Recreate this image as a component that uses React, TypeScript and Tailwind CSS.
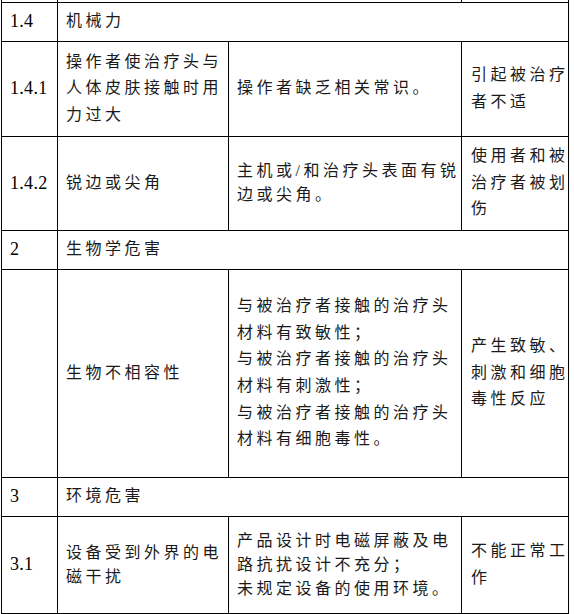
import React from 'react';

type Row = {
  no?: string;
  title?: string[];
  cause?: string[];
  effect?: string[];
  group?: boolean;
  h: string;
};

const rows: Row[] = [
  { no: '1.4', title: ['机械力'], group: true, h: 'h-[39px]' },
  {
    no: '1.4.1',
    title: ['操作者使治疗头与', '人体皮肤接触时用', '力过大'],
    cause: ['操作者缺乏相关常识。'],
    effect: ['引起被治疗', '者不适'],
    h: 'h-[95px]',
  },
  {
    no: '1.4.2',
    title: ['锐边或尖角'],
    cause: ['主机或/和治疗头表面有锐', '边或尖角。'],
    effect: ['使用者和被', '治疗者被划', '伤'],
    h: 'h-[94px]',
  },
  { no: '2', title: ['生物学危害'], group: true, h: 'h-[39px]' },
  {
    title: ['生物不相容性'],
    cause: [
      '与被治疗者接触的治疗头',
      '材料有致敏性；',
      '与被治疗者接触的治疗头',
      '材料有刺激性；',
      '与被治疗者接触的治疗头',
      '材料有细胞毒性。',
    ],
    effect: ['产生致敏、', '刺激和细胞', '毒性反应'],
    h: 'h-[208px]',
  },
  { no: '3', title: ['环境危害'], group: true, h: 'h-[39px]' },
  {
    no: '3.1',
    title: ['设备受到外界的电', '磁干扰'],
    cause: ['产品设计时电磁屏蔽及电', '路抗扰设计不充分；', '未规定设备的使用环境。'],
    effect: ['不能正常工', '作'],
    h: 'h-[97px]',
  },
];

function Lines({ lines, tight }: { lines?: string[]; tight?: boolean }) {
  if (!lines) return null;
  return (
    <div className={tight ? 'leading-[24px]' : 'leading-[26.6px]'}>
      {lines.map((l, i) => (
        <div key={i} className="whitespace-nowrap">
          {l}
        </div>
      ))}
    </div>
  );
}

const cell = 'border border-black align-middle pl-[8px] pr-0 py-0';
const num = 'text-[18px] tracking-[0.3px] !pl-[8px] text-black';

export default function App() {
  return (
    <div className="h-[614px] w-[574px] overflow-hidden bg-white">
      <table className="ml-px w-[567px] table-fixed border-collapse text-[16px] tracking-[3.5px] text-[#1a1a1a] [font-family:'Liberation_Serif','Noto_Sans_CJK_SC',serif]">
        <colgroup>
          <col className="w-[56px]" />
          <col className="w-[171px]" />
          <col className="w-[233px]" />
          <col className="w-[107px]" />
        </colgroup>
        <tbody>
          <tr className="h-[2px]">
            <td className="border border-t-0 border-black p-0" />
            <td colSpan={2} className="border border-t-0 border-black p-0" />
            <td className="border border-t-0 border-black p-0" />
          </tr>
          {rows.map((r, i) =>
            r.group ? (
              <tr key={i} className={r.h}>
                <td className={`${cell} ${num}`}>{r.no}</td>
                <td colSpan={3} className={cell}>
                  <Lines lines={r.title} />
                </td>
              </tr>
            ) : (
              <tr key={i} className={r.h}>
                <td className={`${cell} ${num}`}>{r.no}</td>
                <td className={cell}>
                  <Lines lines={r.title} tight={r.no === '3.1'} />
                </td>
                <td className={cell}>
                  <Lines lines={r.cause} tight={r.no === '3.1' || r.no === '1.4.2'} />
                </td>
                <td className={`${cell} pl-[9px]`}>
                  <Lines lines={r.effect} />
                </td>
              </tr>
            )
          )}
          <tr className="h-[40px]">
            <td className={cell} />
            <td className={cell} />
            <td className={cell} />
            <td className={cell} />
          </tr>
        </tbody>
      </table>
    </div>
  );
}
